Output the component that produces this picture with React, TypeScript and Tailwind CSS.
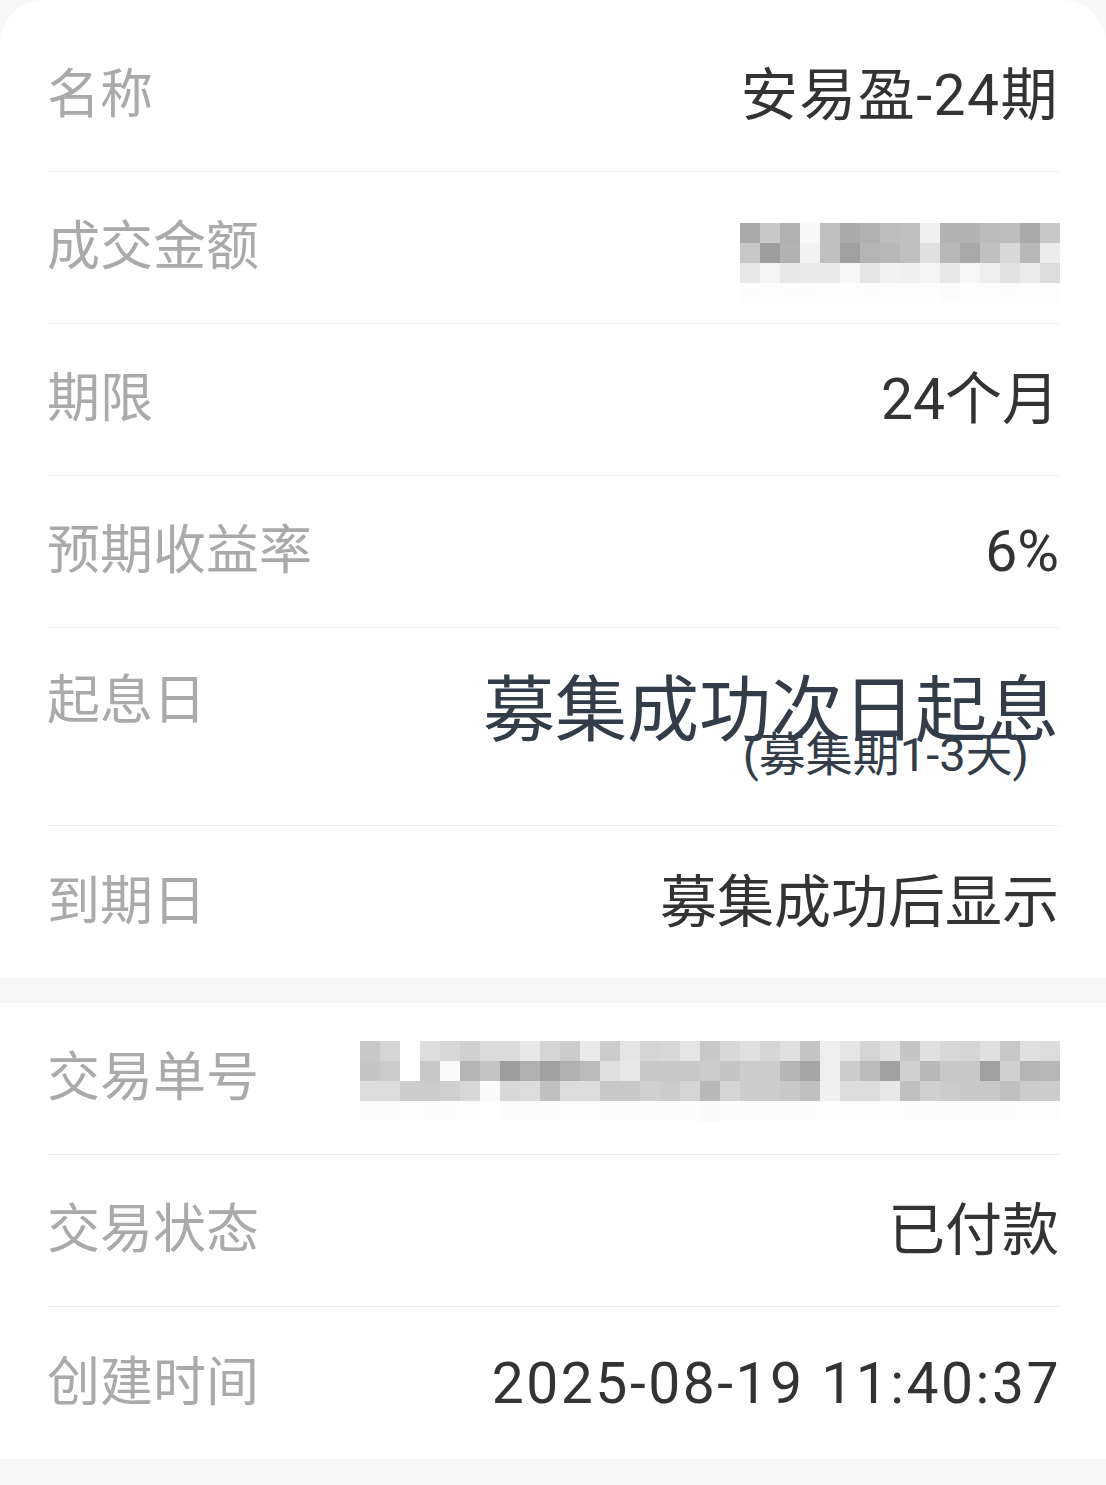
import React from 'react';

const font = { fontFamily: 'Roboto, "Noto Sans CJK SC", sans-serif' };

// 打码区域（马赛克）
const amountMosaic = [
  ['aa', 'c8', 'b0', 'f8', 'c0', 'aa', 'b0', 'bd', 'c0', 'f0', 'b3', 'b3', 'bb', 'bd', 'aa', 'c8'],
  ['c8', '9e', 'b3', 'f2', 'c0', 'a0', 'b5', 'b8', 'c0', 'e0', 'b8', 'a8', 'c0', 'd8', 'b8', 'ec'],
  ['e8', 'f5', 'e8', 'ea', 'ea', 'f7', 'e5', 'f2', 'f0', 'f5', 'e8', 'f7', 'ee', 'e2', 'eb', 'dc'],
  ['fc', 'fd', 'fc', 'fc', 'fd', 'fd', 'fc', 'fd', 'fd', 'fd', 'fb', 'fd', 'fd', 'fc', 'fd', 'fd'],
];

const orderMosaic = [
  ['c8', 'd5', 'ff', 'de', 'd8', 'd0', 'db', 'db', 'e8', 'd5', 'cc', 'ea', 'cc', 'e5', 'd5', 'd8', 'e5', 'c8', 'd8', 'e0', 'd5', 'e0', 'c5', 'ee', 'e5', 'd5', 'e0', 'c5', 'e0', 'd8', 'd5', 'e0', 'c8', 'e0', 'dc'],
  ['c5', 'ca', 'ff', 'c8', 'fa', 'b5', 'c5', '9e', 'b0', 'a0', 'b0', 'bb', 'e0', 'e8', 'c8', 'c8', 'c8', 'cc', 'c5', 'cc', 'cc', 'b5', 'a5', 'ee', 'cc', 'bb', 'a0', 'd0', 'b8', 'c8', 'c8', 'a0', 'd0', 'b5', 'b8'],
  ['dc', 'dc', 'cc', 'cc', 'd0', 'd8', 'fa', 'd8', 'dc', 'c0', 'dc', 'dc', 'c8', 'c8', 'd0', 'cc', 'd5', 'b8', 'd5', 'cc', 'cc', 'c8', 'c0', 'f0', 'dc', 'dc', 'e8', 'c0', 'd0', 'cc', 'c8', 'c8', 'c0', 'cc', 'cc'],
  ['fc', 'fc', 'fd', 'fc', 'fc', 'fd', 'ff', 'fc', 'fc', 'fc', 'fd', 'fd', 'fc', 'fc', 'fc', 'fc', 'fc', 'fa', 'fc', 'fc', 'fc', 'fc', 'fc', 'fd', 'fd', 'fd', 'fd', 'fc', 'fc', 'fc', 'fc', 'fc', 'fc', 'fd', 'fd'],
];

function Mosaic({ data }: { data: string[][] }) {
  const cols = data[0].length;
  return (
    <svg width={cols * 20} height={data.length * 20} className="block">
      {data.map((row, r) =>
        row.map((c, i) => (
          <rect key={`${r}-${i}`} x={i * 20} y={r * 20} width={20} height={20} fill={`#${c}${c}${c}`} />
        ))
      )}
    </svg>
  );
}

function Row({ label, children, last }: { label: string; children: React.ReactNode; last?: boolean }) {
  return (
    <div className={`flex h-[152px] items-center justify-between ${last ? '' : 'border-b border-[#ebebeb]'}`}>
      <span className="text-[53px] leading-none text-[#aaaaaa]">{label}</span>
      {children}
    </div>
  );
}

const Value = ({ children, className = '' }: { children: React.ReactNode; className?: string }) => (
  <span className={`text-[57px] leading-none text-[#333333] ${className}`}>{children}</span>
);

export default function App() {
  return (
    <div className="min-h-screen bg-[#f7f7f7]" style={font}>
      {/* 产品信息 */}
      <div className="rounded-t-[44px] bg-white px-[47px] pt-[20px]">
        <Row label="名称">
          <Value className="tracking-[1.5px]">安易盈-24期</Value>
        </Row>
        <Row label="成交金额">
          <div className="mt-[30px] -mr-[1px]">
            <Mosaic data={amountMosaic} />
          </div>
        </Row>
        <Row label="期限">
          <Value>24个月</Value>
        </Row>
        <Row label="预期收益率">
          <Value>6%</Value>
        </Row>
        <div className="flex h-[198px] items-start justify-between border-b border-[#ebebeb] pt-[47px]">
          <span className="text-[53px] leading-none text-[#aaaaaa]">起息日</span>
          <div className="flex flex-col items-end text-[#333d4a]">
            <span className="text-[72px] leading-none">募集成功次日起息</span>
            <span className="-mt-[16px] mr-[30px] text-[47px] leading-none">(募集期1-3天)</span>
          </div>
        </div>
        <Row label="到期日" last>
          <Value>募集成功后显示</Value>
        </Row>
      </div>

      <div className="h-[25px]" />

      {/* 交易信息 */}
      <div className="bg-white px-[47px]">
        <Row label="交易单号">
          <div className="mt-[4px] -mr-[1px]">
            <Mosaic data={orderMosaic} />
          </div>
        </Row>
        <Row label="交易状态">
          <Value>已付款</Value>
        </Row>
        <Row label="创建时间" last>
          <Value className="tracking-[2.5px] -mr-[2px]">2025-08-19 11:40:37</Value>
        </Row>
      </div>
    </div>
  );
}
